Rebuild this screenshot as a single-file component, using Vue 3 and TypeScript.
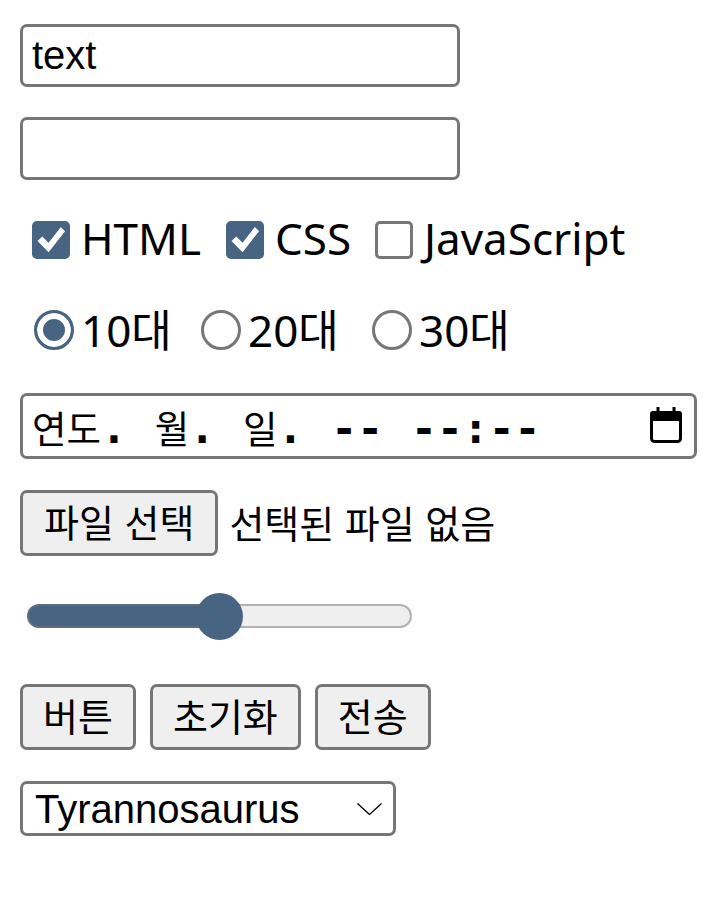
<template>
  <form class="page" @submit.prevent>
    <input class="field" type="text" value="text" />
    <input class="field second" type="text" />

    <div class="choices checks">
      <label v-for="item in languages" :key="item.name" class="choice">
        <input type="checkbox" :checked="item.checked" />
        <span>{{ item.name }}</span>
      </label>
    </div>

    <div class="choices radios">
      <label v-for="(age, i) in ages" :key="age" class="choice">
        <input type="radio" name="age" :checked="i === 0" />
        <span>{{ age }}</span>
      </label>
    </div>

    <div class="date">
      <span class="date-text"><span class="ko">연도</span>. <span class="ko">월</span>. <span class="ko">일</span>. -- --:--</span>
      <svg class="calendar" viewBox="0 0 32 36" aria-hidden="true">
        <path d="M8 0v6M24 0v6" stroke="#000" stroke-width="3" fill="none" />
        <rect x="1.5" y="5.5" width="29" height="29" rx="3" fill="none" stroke="#000" stroke-width="3" />
        <path d="M3 4h26a3 3 0 0 1 3 3v7H0V7a3 3 0 0 1 3-3z" fill="#000" />
      </svg>
    </div>

    <div class="file">
      <button type="button" class="btn">파일 선택</button>
      <span class="file-name">선택된 파일 없음</span>
    </div>

    <input class="range" type="range" value="50" />

    <div class="buttons">
      <button type="button" class="btn">버튼</button>
      <button type="reset" class="btn">초기화</button>
      <button type="submit" class="btn">전송</button>
    </div>

    <div class="select-wrap">
      <select class="select">
        <option>Tyrannosaurus</option>
      </select>
      <svg class="chevron" viewBox="0 0 25 12" aria-hidden="true">
        <path d="M.5.5 12.5 11.5 24.5.5" fill="none" stroke="#000" stroke-width="1.3" />
      </svg>
    </div>
  </form>
</template>

<script setup lang="ts">
interface Language {
  name: string
  checked: boolean
}

const languages: Language[] = [
  { name: 'HTML', checked: true },
  { name: 'CSS', checked: true },
  { name: 'JavaScript', checked: false },
]

const ages = ['10대', '20대', '30대']
</script>

<style scoped>
.page {
  zoom: 2;
  display: flex;
  flex-direction: column;
  align-items: flex-start;
  padding: 12px 10px;
  font-family: "Liberation Sans", "Noto Sans CJK KR", sans-serif;
  accent-color: #476582;
  color: #000;
}

.field {
  box-sizing: border-box;
  width: 220px;
  height: 31.5px;
  font: 20px "Liberation Sans", sans-serif;
  padding: 1px 4.5px;
  border: 1.5px solid #767676;
  border-radius: 3.5px;
  margin: 0;
}

.second {
  margin-top: 15px;
}

.choices {
  display: flex;
  align-items: center;
  height: 30px;
  font-family: "Noto Sans", "Noto Sans CJK KR", sans-serif;
  font-size: 22px;
  margin-top: 15px;
}

.choice {
  display: flex;
  align-items: center;
  flex: none;
}

.choice span {
  padding-bottom: 2px;
}

.choice input {
  appearance: none;
  box-sizing: border-box;
  flex: none;
  position: relative;
  border: 1.5px solid #767676;
  background: #fff;
}

.checks {
  margin-left: 6px;
}

.checks .choice:nth-child(1) {
  width: 97px;
}

.checks .choice:nth-child(2) {
  width: 74.5px;
}

.checks input {
  width: 19px;
  height: 19px;
  margin: 0 5.5px 0 0;
  border-radius: 2.5px;
}

.checks input:checked {
  background: #476582;
  border-color: #476582;
}

.checks input:checked::after {
  content: "";
  position: absolute;
  inset: -1.5px;
  background: #fff;
  clip-path: polygon(14.5% 52.6%, 27% 40.5%, 43.6% 57%, 76% 15.5%, 87% 26.7%, 43.6% 82%);
}

.radios {
  margin-left: 7px;
}

.radios .choice:nth-child(1) {
  width: 83.5px;
}

.radios .choice:nth-child(2) {
  width: 85.5px;
}

.radios input {
  width: 20px;
  height: 20px;
  margin: 0 3.5px 0 0;
  border-radius: 50%;
}

.radios input:checked {
  background: #476582;
  border-color: #476582;
  box-shadow: inset 0 0 0 3px #fff;
}

.date {
  box-sizing: border-box;
  margin-top: 16.5px;
  width: 338.5px;
  height: 33px;
  display: flex;
  align-items: center;
  justify-content: space-between;
  padding: 0 6px 0 4.5px;
  border: 1.5px solid #767676;
  border-radius: 3.5px;
}

.date-text {
  white-space: pre;
  font-family: "DejaVu Sans Mono", monospace;
  font-size: 21.5px;
  font-weight: 700;
  word-spacing: 1px;
}

.ko {
  font-family: "Noto Sans CJK KR", sans-serif;
  font-size: 18.75px;
  font-weight: 400;
}

.calendar {
  width: 16px;
  height: 18px;
  margin-bottom: 1.5px;
}

.file {
  margin-top: 15.5px;
  display: flex;
  align-items: center;
  gap: 5.5px;
  font-size: 19px;
}

.file-name {
  padding-bottom: 2px;
}

.btn {
  box-sizing: border-box;
  height: 33px;
  padding: 0 10.5px 2.5px;
  font: 19px "Liberation Sans", "Noto Sans CJK KR", sans-serif;
  background: #efefef;
  border: 1.5px solid #767676;
  border-radius: 3.5px;
  color: #000;
}

.range {
  appearance: none;
  background: transparent;
  margin: 20px 0 0 3.5px;
  width: 192.5px;
  height: 20px;
}

.range::-webkit-slider-runnable-track {
  box-sizing: border-box;
  height: 12px;
  border: 1px solid transparent;
  border-radius: 6px;
  background:
    linear-gradient(to right, #476582 50%, #efefef 50%) padding-box,
    linear-gradient(to right, #636c78 50%, #b2b2b2 50%) border-box;
}

.range::-webkit-slider-thumb {
  appearance: none;
  width: 23.5px;
  height: 23.5px;
  margin-top: -6.75px;
  border-radius: 50%;
  background: #476582;
}

.buttons {
  margin-top: 24px;
  display: flex;
  gap: 7px;
}

.buttons .btn {
  padding-left: 10px;
  padding-right: 10px;
}

.select-wrap {
  position: relative;
  margin-top: 15.5px;
  display: flex;
}

.select {
  appearance: none;
  box-sizing: border-box;
  width: 188px;
  height: 27.5px;
  font: 20px "Liberation Sans", sans-serif;
  border: 1.5px solid #767676;
  border-radius: 3.5px;
  background: #fff;
  color: #000;
  padding: 0 0 0 6px;
}

.chevron {
  position: absolute;
  top: 11px;
  right: 7px;
  width: 12.5px;
  height: 6px;
  pointer-events: none;
}
</style>
